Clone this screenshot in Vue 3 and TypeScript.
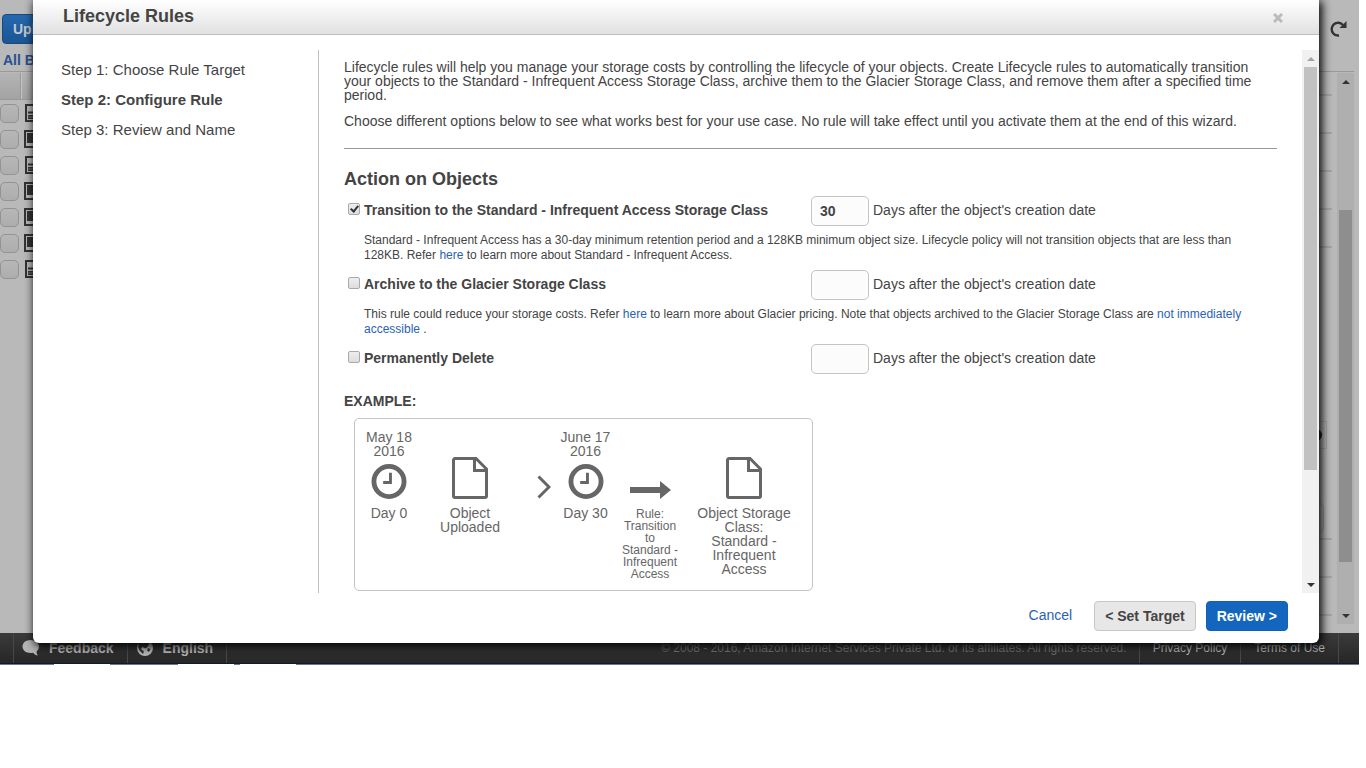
<script setup lang="ts">
import { reactive } from 'vue'

interface Action {
  id: string
  title: string
  enabled: boolean
  days: string
}

const steps: string[] = ['Step 1: Choose Rule Target', 'Step 2: Configure Rule', 'Step 3: Review and Name']
const current = 1

const actions = reactive<Action[]>([
  { id: 'transition', title: 'Transition to the Standard - Infrequent Access Storage Class', enabled: true, days: '30' },
  { id: 'archive', title: 'Archive to the Glacier Storage Class', enabled: false, days: '' },
  { id: 'delete', title: 'Permanently Delete', enabled: false, days: '' },
])

const files: string[] = ['doc', 'image', 'doc', 'image', 'image', 'image', 'doc']
</script>

<template>
  <div class="screen">
    <div class="console" aria-hidden="true">
      <div class="toolbar">
        <button class="upload" type="button" tabindex="-1">Upload</button>
        <svg class="refresh" viewBox="0 0 18 18" width="18" height="18">
          <path d="M9 15.500A6.400 6.400 0 1 1 13 5" fill="none" stroke="#333" stroke-width="2.400" />
          <path d="M16.500 1v7H9.500z" fill="#333" />
        </svg>
      </div>
      <div class="crumbs"><a href="#" tabindex="-1">All Buckets</a></div>
      <div class="workspace">
        <div class="objects">
          <div class="thead"><span></span></div>
          <div v-for="(kind, i) in files" :key="i" class="object">
            <input type="checkbox" tabindex="-1" :aria-label="'Object ' + (i + 1)" />
            <svg v-if="kind === 'doc'" class="doc" viewBox="0 0 16 18" width="16" height="18">
              <rect x="1" y="1" width="14" height="16" fill="#b9b9b9" stroke="#333" stroke-width="2" />
              <path d="M3 8.500h10" stroke="#333" stroke-width="2" />
              <path d="M3 11h10v4H3z" fill="#333" />
              <path d="M3 13h10" stroke="#777" stroke-width="1" />
            </svg>
            <svg v-else viewBox="0 0 18 18" width="18" height="18">
              <rect x="1" y="1" width="16" height="16" fill="#b9b9b9" stroke="#333" stroke-width="2" />
              <rect x="3" y="3" width="12" height="10" fill="#333" />
            </svg>
          </div>
        </div>
        <div class="details">
          <i v-for="n in 5" :key="n" class="rule"></i>
          <div class="picker"><b></b></div>
          <div class="box"></div>
          <i v-for="n in 3" :key="'b' + n" class="rule"></i>
        </div>
        <div class="scrollbar outer">
          <span class="arrow up"></span>
          <span class="lead"></span>
          <span class="thumb"></span>
          <span class="tail"></span>
          <span class="arrow down"></span>
        </div>
      </div>
      <div class="bottombar">
        <div class="cell gap"></div>
        <div class="cell feedback">
          <svg viewBox="0 0 18 18" width="18" height="18">
            <path d="M8.500 1C4 1 .5 3.800.5 7.500S4 14 8.500 14c1 0 2 0 2.700-.3 1 1.500 2.800 2.700 4.800 2.800-1-1-1.500-2.600-1.400-4.100 1.500-1.300 2.400-3 2.400-4.900C17 3.800 13 1 8.500 1z" fill="#b4b4b4" />
          </svg>
          Feedback
        </div>
        <div class="cell language">
          <svg viewBox="0 0 18 18" width="18" height="18">
            <circle cx="9" cy="9" r="8" fill="#b4b4b4" />
            <path d="M3 3l4 1.500 3-2.500 3 2-1 3.500-2.500 2-3-1.500L5 10l3 2.500L7 15 3.500 11.500 2 8z" fill="#333" />
            <path d="M12 9l2.500 1-1.500 3-2-1.500z" fill="#333" />
          </svg>
          English
        </div>
        <div class="copyright">© 2008 - 2016, Amazon Internet Services Private Ltd. or its affiliates. All rights reserved.</div>
        <div class="cell legal"><a href="#" tabindex="-1">Privacy Policy</a></div>
        <div class="cell legal"><a href="#" tabindex="-1">Terms of Use</a></div>
        <div class="end"></div>
      </div>
      <div class="edge"><i></i><i></i><i></i></div>
    </div>

    <section class="modal" role="dialog" aria-labelledby="title">
      <header>
        <h1 id="title">Lifecycle Rules</h1>
        <button type="button" class="close" aria-label="Close">
          <svg viewBox="0 0 10 10" width="10" height="10">
            <path d="M1 1l8 8M9 1l-8 8" stroke="#bbb" stroke-width="3" />
          </svg>
        </button>
      </header>

      <div class="content">
        <nav>
          <ol>
            <li v-for="(step, i) in steps" :key="step" :class="{ current: i === current }">{{ step }}</li>
          </ol>
        </nav>

        <main>
          <p>
            Lifecycle rules will help you manage your storage costs by controlling the lifecycle of your objects. Create
            Lifecycle rules to automatically transition your objects to the Standard - Infrequent Access Storage Class,
            archive them to the Glacier Storage Class, and remove them after a specified time period.
          </p>
          <p>
            Choose different options below to see what works best for your use case. No rule will take effect until you
            activate them at the end of this wizard.
          </p>
          <hr />
          <h2>Action on Objects</h2>

          <div v-for="action in actions" :key="action.id" class="action">
            <div class="row">
              <input :id="action.id" v-model="action.enabled" type="checkbox" class="tick" />
              <label class="name" :for="action.id">{{ action.title }}</label>
              <input :id="action.id + '-days'" v-model="action.days" type="text" class="days" />
              <label :for="action.id + '-days'">Days after the object's creation date</label>
            </div>
            <p v-if="action.id === 'transition'" class="note">
              Standard - Infrequent Access has a 30-day minimum retention period and a 128KB minimum object size.
              Lifecycle policy will not transition objects that are less than 128KB. Refer <a href="#">here</a> to learn
              more about Standard - Infrequent Access.
            </p>
            <p v-else-if="action.id === 'archive'" class="note">
              This rule could reduce your storage costs. Refer <a href="#">here</a> to learn more about Glacier pricing.
              Note that objects archived to the Glacier Storage Class are <a href="#">not immediately accessible</a> .
            </p>
          </div>

          <h3>EXAMPLE:</h3>
          <div class="example">
            <figure>
              <div class="art">
                May 18 2016
                <svg viewBox="0 0 36 36" width="36" height="36">
                  <circle cx="18" cy="18" r="15.500" fill="none" stroke="#666" stroke-width="5" />
                  <path d="M19.500 9v10H12" fill="none" stroke="#666" stroke-width="3" />
                </svg>
              </div>
              <figcaption>Day 0</figcaption>
            </figure>
            <figure>
              <div class="art">
                <svg viewBox="0 0 36 42" width="36" height="42">
                  <path d="M2.500 1.500H24L34.500 12V39a1.500 1.500 0 0 1-1.500 1.500H3A1.500 1.500 0 0 1 1.500 39V3A1.500 1.500 0 0 1 3 1.500z" fill="none" stroke="#666" stroke-width="3" />
                  <path d="M22.500 2v11.500H34" fill="none" stroke="#666" stroke-width="3" />
                </svg>
              </div>
              <figcaption>Object Uploaded</figcaption>
            </figure>
            <figure class="next">
              <div class="art">
                <svg viewBox="0 0 14 24" width="14" height="24">
                  <path d="M1.500 1.500L12 12 1.500 22.500" fill="none" stroke="#666" stroke-width="3" />
                </svg>
              </div>
            </figure>
            <figure>
              <div class="art">
                June 17 2016
                <svg viewBox="0 0 36 36" width="36" height="36">
                  <circle cx="18" cy="18" r="15.500" fill="none" stroke="#666" stroke-width="5" />
                  <path d="M19.500 9v10H12" fill="none" stroke="#666" stroke-width="3" />
                </svg>
              </div>
              <figcaption>Day 30</figcaption>
            </figure>
            <figure class="transition">
              <div class="art">
                <svg viewBox="0 0 41 18" width="41" height="18">
                  <path d="M0 6h30V0l11 9-11 9v-6H0z" fill="#666" />
                </svg>
              </div>
              <figcaption>Rule: Transition to Standard - Infrequent Access</figcaption>
            </figure>
            <figure class="result">
              <div class="art">
                <svg viewBox="0 0 36 42" width="36" height="42">
                  <path d="M2.500 1.500H24L34.500 12V39a1.500 1.500 0 0 1-1.500 1.500H3A1.500 1.500 0 0 1 1.500 39V3A1.500 1.500 0 0 1 3 1.500z" fill="none" stroke="#666" stroke-width="3" />
                  <path d="M22.500 2v11.500H34" fill="none" stroke="#666" stroke-width="3" />
                </svg>
              </div>
              <figcaption>Object Storage Class: Standard - Infrequent Access</figcaption>
            </figure>
          </div>
        </main>

        <div class="scrollbar inner">
          <span class="arrow up"></span>
          <span class="thumb"></span>
          <span class="tail"></span>
          <span class="arrow down"></span>
        </div>
      </div>

      <footer>
        <a href="#">Cancel</a>
        <button type="button" class="back">&lt; Set Target</button>
        <button type="button" class="review">Review &gt;</button>
      </footer>
    </section>
  </div>
</template>

<style>
body {
  margin: 0;
  background: #fff;
  overflow: hidden;
}
</style>

<style scoped>
* {
  box-sizing: border-box;
}
.screen {
  position: relative;
  height: calc(100vh - 103px);
  margin-right: 7px;
  overflow: hidden;
  font: 14px/14px "Liberation Sans", Arial, sans-serif;
  color: #444;
}
h1,
h2,
h3,
p,
ol,
figure {
  margin: 0;
  padding: 0;
}
button,
input {
  font: inherit;
}
a {
  color: #2a62b4;
  text-decoration: none;
}

/* Console page behind the dialog */
.console {
  display: flex;
  flex-direction: column;
  height: 100%;
  background: #b9b9b9;
}
.toolbar {
  display: flex;
  justify-content: space-between;
  align-items: center;
  height: 48px;
  padding: 10px 11px 0 2px;
}
.upload {
  height: 30px;
  padding: 0 10px;
  border: 1px solid #164a85;
  border-radius: 4px;
  background: linear-gradient(#2668ae, #1b5594);
  color: #c4c8cc;
  font-weight: bold;
}
.crumbs {
  height: 24px;
  padding: 5px 3px;
  margin-right: 5px;
  border-bottom: 1px solid #999;
  font-weight: bold;
}
.crumbs a {
  color: #26508e;
}
.workspace {
  flex: 1;
  display: flex;
  min-height: 0;
  padding-right: 5px;
}
.objects {
  flex: 1;
}
.thead {
  height: 27px;
  margin-top: 1px;
  background: linear-gradient(#b4b4b4, #a3a3a3);
  border-bottom: 1px solid #999;
}
.thead span {
  display: block;
  width: 22px;
  height: 26px;
  border-right: 1px solid #c4c4c4;
  box-shadow: inset -1px 0 #999;
}
.object {
  display: flex;
  align-items: center;
  gap: 5px;
  height: 26px;
}
.object input {
  appearance: none;
  width: 19px;
  height: 19px;
  margin: 0;
  border: 1px solid #939393;
  border-radius: 5px;
  background: linear-gradient(#b7b7b7, #adadad);
}
.object .doc {
  margin-left: 1px;
}
.details {
  display: flex;
  flex-direction: column;
  width: 60px;
  margin-right: 5px;
}
.rule {
  flex: none;
  height: 38px;
  border-bottom: 2px solid #a3a3a3;
}
.rule:first-child {
  height: 24px;
}
.picker {
  display: flex;
  align-items: center;
  justify-content: flex-end;
  height: 28px;
  margin: 173px 5px 0 0;
  padding-right: 4px;
  border: 1px solid #a8a8a8;
}
.picker b {
  width: 12px;
  height: 12px;
  border-radius: 6px;
  background: #222;
}
.box {
  height: 30px;
  margin: 54px 8px -31px 0;
  border: 1px solid #9c9c9c;
  border-radius: 5px;
}
.scrollbar {
  display: flex;
  flex-direction: column;
  flex: none;
  width: 17px;
  padding: 0 2px;
}
.arrow {
  display: flex;
  align-items: center;
  justify-content: center;
  flex: 0 0 17px;
}
.arrow::before {
  content: "";
  border: 4px solid transparent;
}
.up::before {
  border-top: 0;
  border-bottom-color: #333;
}
.down::before {
  border-bottom: 0;
  border-top-color: #333;
}
.outer {
  margin: 1px 0 9px;
  background: #afafaf;
}
.outer .lead {
  flex: 120;
}
.outer .thumb {
  flex: 352;
  background: #8e8e8e;
}
.outer .tail {
  flex: 45;
}
.bottombar {
  display: flex;
  flex: none;
  height: 30px;
  background: linear-gradient(#3b3b3b, #262626);
  color: #b4b4b4;
}
.cell {
  display: flex;
  align-items: center;
  border-right: 1px solid #484848;
}
.gap {
  width: 14px;
}
.feedback,
.language {
  gap: 9px;
  padding: 0 13px 0 8px;
  font-weight: bold;
}
.copyright {
  flex: 1;
  padding: 0 12px;
  font-size: 12px;
  line-height: 30px;
  text-align: right;
  color: #707070;
}
.legal {
  padding: 0 13px;
  border-right: 0;
  border-left: 1px solid #484848;
  font-size: 12px;
}
.legal a {
  color: #b4b4b4;
}
.end {
  width: 21px;
  border-left: 1px solid #484848;
}
.edge {
  display: flex;
  gap: 6px;
  flex: none;
  height: 2px;
  padding-left: 54px;
  border-top: 1px solid #101a2e;
  background: #6a7894;
}
.edge i {
  width: 56px;
  background: #fff;
}
.edge i:first-child {
  margin-right: 62px;
}

/* Dialog */
.modal {
  position: absolute;
  inset: 0 40px 22px 33px;
  display: flex;
  flex-direction: column;
  background: #fff;
  border-radius: 0 0 6px 6px;
  box-shadow: 2px 2px 10px 1px #000;
}
header {
  display: flex;
  justify-content: space-between;
  align-items: center;
  flex: none;
  height: 35px;
  padding: 0 36px 3px 30px;
  border-bottom: 1px solid #bfbfbf;
  background: linear-gradient(#fff, #e1e1e1);
}
h1,
h2 {
  font-size: 18px;
  line-height: 20px;
}
.close {
  display: flex;
  padding: 4px 0 0;
  border: 0;
  background: none;
}
.content {
  flex: 1;
  display: flex;
  min-height: 0;
  margin-top: 15px;
}
nav {
  flex: none;
  width: 286px;
  padding: 5px 28px;
  border-right: 1px solid #bfbfbf;
}
ol {
  list-style: none;
  font-size: 15px;
  line-height: 30px;
}
.current {
  font-weight: bold;
}
main {
  flex: 1;
  min-width: 0;
  padding: 10px 25px 0;
  overflow: hidden;
}
main > p {
  margin-bottom: 12px;
}
hr {
  height: 1px;
  margin: 20px 0;
  border: 0;
  background: #999;
}
h2 {
  margin-bottom: 7px;
}
.row {
  display: flex;
  align-items: center;
  height: 30px;
}
.row label {
  padding-bottom: 2px;
}
.tick {
  appearance: none;
  display: flex;
  width: 12px;
  height: 12px;
  margin: 0 4px 5px;
  border: 1px solid #aaa;
  border-radius: 2px;
  background: linear-gradient(#eee, #ddd);
}
.tick:checked::before {
  content: "";
  width: 3px;
  height: 6px;
  margin: 0 0 0 3px;
  border: solid #333;
  border-width: 0 2px 2px 0;
  transform: rotate(40deg);
}
.name {
  width: 447px;
  font-weight: bold;
}
.days {
  width: 58px;
  height: 30px;
  margin: 0 4px 0 0;
  padding: 0 8px;
  border: 1px solid #c4c4c4;
  border-radius: 5px;
  background: #fcfcfc;
  color: #444;
  font-weight: bold;
}
.note {
  padding: 7px 20px;
  font-size: 12px;
  line-height: 15px;
}
h3 {
  margin: 20px 0 10px;
  font-size: 14px;
  line-height: 14px;
}
.example {
  display: grid;
  grid-template-columns: 68px 94px 38px 61px 68px 120px;
  width: 459px;
  margin-left: 10px;
  padding: 11px 0 10px;
  border: 1px solid #c4c4c4;
  border-radius: 5px;
  color: #666;
  text-align: center;
}
figure {
  padding: 0 4px;
}
.art {
  display: flex;
  flex-direction: column;
  align-items: center;
  justify-content: flex-end;
  gap: 6px;
  height: 69px;
}
figcaption {
  padding-top: 7px;
}
.next .art {
  align-items: flex-end;
}
.transition figcaption {
  padding-top: 9px;
  font-size: 12px;
  line-height: 12px;
}
.result {
  padding: 0 12px;
}
.inner {
  background: #f1f1f1;
}
.inner .thumb {
  flex: 403;
  background: #c1c1c1;
}
.inner .tail {
  flex: 106;
}
.inner .up::before {
  border-bottom-color: #a3a3a3;
}
footer {
  display: flex;
  align-items: center;
  justify-content: flex-end;
  flex: none;
  gap: 10px;
  height: 50px;
  padding: 0 31px 4px 0;
}
footer a {
  margin-right: 12px;
  padding-bottom: 3px;
}
footer button {
  height: 30px;
  padding: 0 10px;
  border: 1px solid #c8c8c8;
  border-radius: 4px;
  background: #e7e7e7;
  color: #444;
  font-weight: bold;
}
footer .review {
  border-color: #1261b8;
  background: #1366bd;
  color: #fff;
}
</style>
